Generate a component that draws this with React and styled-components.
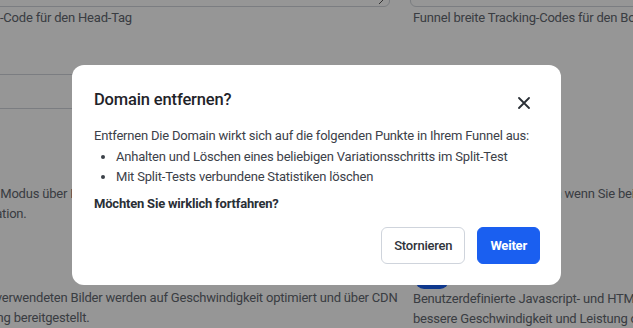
import React from "react";
import styled, { createGlobalStyle } from "styled-components";

const GlobalStyle = createGlobalStyle`
  html, body {
    margin: 0;
    padding: 0;
    background: #ffffff;
    font-family: Roboto, "Liberation Sans", sans-serif;
    overflow: hidden;
  }
`;

const Page = styled.div`
  position: relative;
  width: 633px;
  height: 328px;
  overflow: hidden;
  background: #ffffff;
`;

const Grid = styled.div`
  display: grid;
  grid-template-columns: 438px 1fr;
  column-gap: 20px;
  margin-left: -48px;
  margin-top: -38px;
`;

const Column = styled.div`
  display: flex;
  flex-direction: column;
  padding-left: ${(p) => p.$inset || 0}px;
`;

const TextArea = styled.div`
  height: 43px;
  border: 1px solid #d1d5db;
  border-radius: 6px;
  position: relative;
  margin-left: ${(p) => p.$shift || 0}px;
`;

const Resize = styled.span`
  position: absolute;
  right: 2px;
  bottom: 2px;
  width: 8px;
  height: 8px;
  background: linear-gradient(135deg, transparent 45%, #555 45%, #555 55%, transparent 55%);
`;

const Hint = styled.p`
  margin: ${(p) => p.$top ?? 1}px 0 0;
  font-size: 13px;
  letter-spacing: -0.2px;
  line-height: 20px;
  color: #636870;
  white-space: nowrap;
`;

const Input = styled.div`
  margin-top: 46px;
  height: 33px;
  border: 1px solid #d1d5db;
  border-radius: 6px;
`;

const Spacer = styled.div`
  height: ${(p) => p.$h}px;
`;

const Toggle = styled.div`
  width: 34px;
  height: 18px;
  border-radius: 9px;
  background: #1a5ff0;
  margin-left: 2px;
`;

const Overlay = styled.div`
  position: absolute;
  inset: 0;
  background: rgba(0, 0, 0, 0.41);
  display: flex;
  align-items: flex-start;
  padding: 65px 0 0 72px;
`;

const Modal = styled.div`
  width: 489px;
  box-sizing: border-box;
  background: #ffffff;
  border-radius: 12px;
  padding: 22px 21px 21px 22px;
`;

const Header = styled.div`
  display: flex;
  align-items: center;
  justify-content: space-between;
`;

const Title = styled.h2`
  margin: 0;
  font-size: 16.5px;
  letter-spacing: -0.15px;
  font-weight: 500;
  color: #1f2329;
  line-height: 24px;
`;

const Close = styled.button`
  border: 0;
  background: none;
  padding: 0;
  width: 20px;
  height: 20px;
  display: flex;
  align-items: center;
  justify-content: center;
  margin-top: 6px;
  margin-right: 6px;
  cursor: pointer;
`;

const Body = styled.div`
  margin-top: 13px;
  font-size: 13px;
  letter-spacing: -0.2px;
  line-height: 20px;
  color: #3c4149;
`;

const Text = styled.p`
  margin: 0;
  white-space: nowrap;
`;

const List = styled.ul`
  margin: 1px 0 0;
  padding-left: 22px;
  li {
    line-height: 20px;
  }
`;

const Strong = styled.p`
  margin: 7px 0 0;
  font-weight: 700;
  color: #2a2f36;
`;

const Footer = styled.div`
  display: flex;
  justify-content: flex-end;
  gap: 12px;
  margin-top: 13px;
`;

const Button = styled.button`
  height: 37px;
  padding: 0 12px;
  border-radius: 6px;
  font-family: Roboto, "Liberation Sans", sans-serif;
  font-size: 13px;
  letter-spacing: -0.2px;
  font-weight: ${(p) => (p.$primary ? 700 : 500)};
  color: ${(p) => (p.$primary ? "#ffffff" : "#2f343b")};
  background: ${(p) => (p.$primary ? "#1a5ff0" : "#ffffff")};
  border: 1px solid ${(p) => (p.$primary ? "#1a5ff0" : "#cfd4dc")};
  cursor: pointer;
`;

export default function App() {
  return (
    <Page>
      <GlobalStyle />
      <Grid>
        <Column>
          <TextArea>
            <Resize />
          </TextArea>
          <Hint>Tracking-Code für den Head-Tag</Hint>
          <Input />
          <Spacer $h={74} />
          <Hint>Sie dem Modus über Ihre</Hint>
          <Hint $top={0}>Kombination.</Hint>
          <Spacer $h={63} />
          <Hint>Alle die verwendeten Bilder werden auf Geschwindigkeit optimiert und über CDN</Hint>
          <Hint $top={0}>Zustellung bereitgestellt.</Hint>
        </Column>
        <Column $inset={3}>
          <TextArea $shift={-3} />
          <Hint>Funnel breite Tracking-Codes für den Body-Tag</Hint>
          <Spacer $h={155} />
          <Hint>Aktivieren Sie diese Option wenn Sie bei</Hint>
          <Spacer $h={67} />
          <Toggle />
          <Hint $top={0}>Benutzerdefinierte Javascript- und HTML-Codes</Hint>
          <Hint $top={0}>bessere Geschwindigkeit und Leistung oder</Hint>
        </Column>
      </Grid>
      <Overlay>
        <Modal>
          <Header>
            <Title>Domain entfernen?</Title>
            <Close aria-label="Schließen">
              <svg width="12" height="12" viewBox="0 0 12 12">
                <path d="M1 1L11 11M11 1L1 11" stroke="#2a2f36" strokeWidth="1.8" strokeLinecap="round" />
              </svg>
            </Close>
          </Header>
          <Body>
            <Text>Entfernen Die Domain wirkt sich auf die folgenden Punkte in Ihrem Funnel aus:</Text>
            <List>
              <li>Anhalten und Löschen eines beliebigen Variationsschritts im Split-Test</li>
              <li>Mit Split-Tests verbundene Statistiken löschen</li>
            </List>
            <Strong>Möchten Sie wirklich fortfahren?</Strong>
          </Body>
          <Footer>
            <Button>Stornieren</Button>
            <Button $primary>Weiter</Button>
          </Footer>
        </Modal>
      </Overlay>
    </Page>
  );
}
